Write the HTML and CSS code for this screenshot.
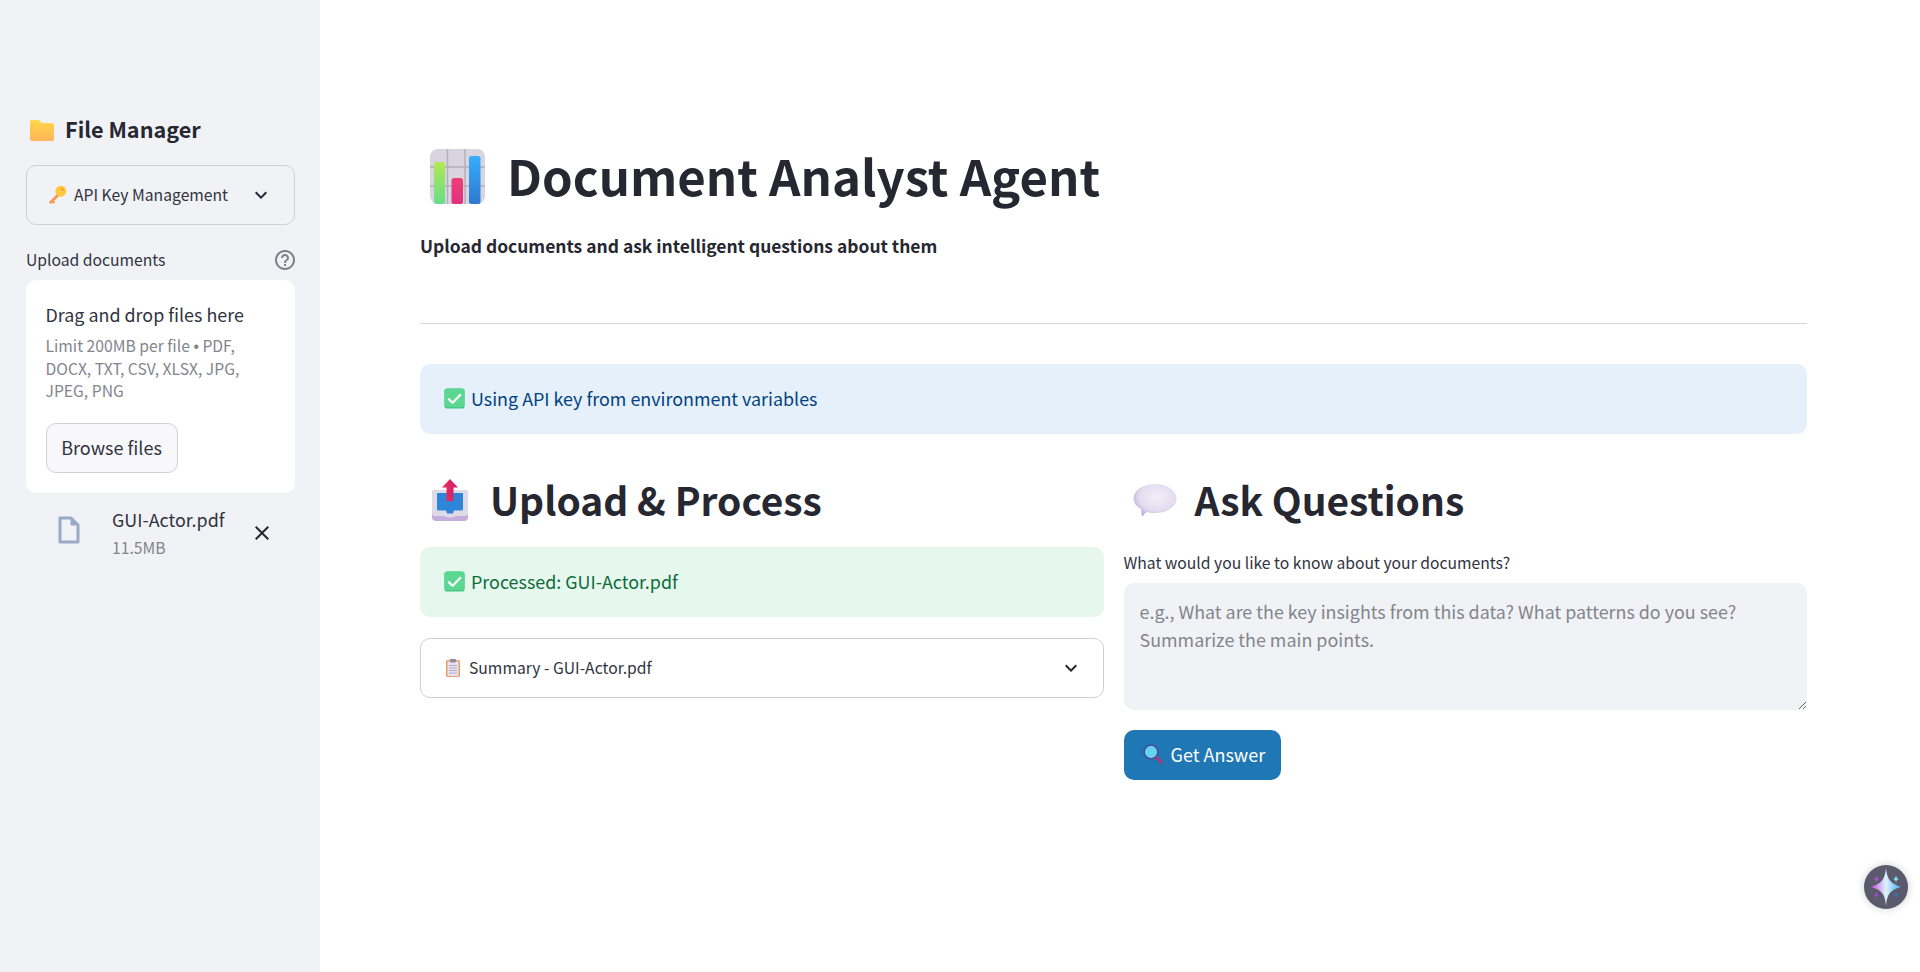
FILE: index.html

```html
<!DOCTYPE html>
<html>
<head>
<meta charset="utf-8">
<title>Document Analyst Agent</title>
<link rel="stylesheet" href="styles.css">
</head>
<body>
<svg class="defs" width="0" height="0">
  <defs>
    <linearGradient id="gGreen" x1="0" y1="0" x2="0" y2="1"><stop offset="0" stop-color="#b4e84e"/><stop offset="1" stop-color="#66dd8c"/></linearGradient>
    <linearGradient id="gPink" x1="0" y1="0" x2="0" y2="1"><stop offset="0" stop-color="#ef3f77"/><stop offset="1" stop-color="#e0307f"/></linearGradient>
    <linearGradient id="gBlue" x1="0" y1="0" x2="0" y2="1"><stop offset="0" stop-color="#36aefc"/><stop offset="1" stop-color="#2f78d0"/></linearGradient>
    <linearGradient id="gFolder" x1="0" y1="0" x2="0" y2="1"><stop offset="0" stop-color="#ffd84f"/><stop offset="1" stop-color="#ffb357"/></linearGradient>
    <linearGradient id="gArrow" x1="0" y1="0" x2="1" y2="0"><stop offset="0" stop-color="#f0304f"/><stop offset="1" stop-color="#c81e78"/></linearGradient>
    <radialGradient id="gBubble" cx="0.55" cy="0.4" r="0.65"><stop offset="0" stop-color="#f3eff8"/><stop offset="0.65" stop-color="#e4dcef"/><stop offset="1" stop-color="#b8a5d8"/></radialGradient>
    <linearGradient id="gStar" x1="0" y1="0" x2="1" y2="0"><stop offset="0" stop-color="#c04fd8"/><stop offset="0.5" stop-color="#dff2ff"/><stop offset="1" stop-color="#3fa8f0"/></linearGradient>
    <symbol id="check" viewBox="0 0 32 32">
      <rect x="2" y="2" width="28" height="28" rx="4" fill="#45c184"/>
      <rect x="2" y="2" width="28" height="26" rx="4" fill="#5ad892"/>
      <path d="M8 17l5.500 5L24 11" fill="none" stroke="#f6f4f8" stroke-width="3.200" stroke-linecap="round" stroke-linejoin="round"/>
    </symbol>
  </defs>
</svg>

<aside class="sidebar">
  <h2 class="side-title">
    <svg class="emoji-folder" viewBox="0 0 28 24"><path d="M2 4a2 2 0 0 1 2-2h7l3 3h10a2 2 0 0 1 2 2v14a2 2 0 0 1-2 2H4a2 2 0 0 1-2-2z" fill="url(#gFolder)"/><path d="M2 7h24v2H2z" fill="#ffc83d" opacity=".6"/></svg>
    <span>File Manager</span>
  </h2>

  <div class="expander side-expander">
    <span class="exp-label">
      <svg class="emoji-key" viewBox="0 0 20 20"><path d="M10 9 2.500 16.500l1.800 1.600 1.300-1.200 1.200 1 1.400-1.400-1-1.100L12 11z" fill="#f59a4a"/><circle cx="13.500" cy="6.500" r="5" fill="#ffc83d"/><circle cx="15" cy="5" r="1.300" fill="#f0a030"/></svg>
      <span>API Key Management</span>
    </span>
    <svg class="chevron" viewBox="0 0 24 24"><path d="M16.590 8.590 12 13.170 7.410 8.590 6 10l6 6 6-6z"/></svg>
  </div>

  <div class="upload-label">
    <span>Upload documents</span>
    <svg class="help" viewBox="0 0 24 24"><path d="M11 18h2v-2h-2v2zm1-16C6.480 2 2 6.480 2 12s4.480 10 10 10 10-4.480 10-10S17.520 2 12 2zm0 18c-4.410 0-8-3.590-8-8s3.590-8 8-8 8 3.590 8 8-3.590 8-8 8zm0-14c-2.210 0-4 1.790-4 4h2c0-1.100.9-2 2-2s2 .9 2 2c0 2-3 1.750-3 5h2c0-2.250 3-2.500 3-5 0-2.210-1.790-4-4-4z"/></svg>
  </div>
  <div class="dropzone">
    <div class="drop-title">Drag and drop files here</div>
    <div class="drop-hint">Limit 200MB per file <span class="dot">•</span> PDF,<br>DOCX, TXT, CSV, XLSX, JPG,<br>JPEG, PNG</div>
    <button class="browse">Browse files</button>
  </div>

  <div class="file-row">
    <svg class="file-icon" viewBox="0 0 24 30"><path d="M3 3h11l7 7v17H3z" fill="none" stroke="#9aa9c8" stroke-width="3" stroke-linejoin="round"/><path d="M14 3v7h7z" fill="#9aa9c8" stroke="#9aa9c8" stroke-width="1" stroke-linejoin="round"/></svg>
    <div class="file-info">
      <div class="file-name">GUI-Actor.pdf</div>
      <div class="file-size">11.5MB</div>
    </div>
    <svg class="file-close" viewBox="0 0 24 24"><path d="M19 6.410 17.590 5 12 10.590 6.410 5 5 6.410 10.590 12 5 17.590 6.410 19 12 13.410 17.590 19 19 17.590 13.410 12z"/></svg>
  </div>
</aside>

<main class="main">
  <h1 class="title">
    <svg class="emoji-chart" viewBox="0 0 55 55">
      <rect width="55" height="55" rx="8" fill="#d8d4e0"/>
      <path d="M17.500 0v55M35 0v55M0 18h55M0 37h55" stroke="#b3afbc" stroke-width="1.500"/>
      <rect x="4" y="13" width="11" height="42" rx="2.500" fill="url(#gGreen)"/>
      <rect x="21.500" y="29" width="11.500" height="26" rx="2.500" fill="url(#gPink)"/>
      <rect x="39" y="7" width="11.500" height="48" rx="2.500" fill="url(#gBlue)"/>
    </svg>
    <span>Document Analyst Agent</span>
  </h1>
  <p class="subtitle">Upload documents and ask intelligent questions about them</p>
  <hr class="rule">
  <div class="alert alert-info">
    <svg class="emoji-check"><use href="#check"/></svg>
    Using API key from environment variables
  </div>

  <div class="columns">
    <section class="col">
      <h2 class="section-title">
        <svg class="emoji-upload" viewBox="0 0 38 44">
          <path d="M1 39V15a3 3 0 0 1 3-3h30a3 3 0 0 1 3 3v24a4 4 0 0 1-4 4H5a4 4 0 0 1-4-4z" fill="#c3aedc"/>
          <path d="M1 35V15a3 3 0 0 1 3-3h30a3 3 0 0 1 3 3v20a3 3 0 0 1-3 3h-9q-6 3-12 0H4a3 3 0 0 1-3-3z" fill="#dfdbe6"/>
          <path d="M6 15h26v16a1.500 1.500 0 0 1-1.500 1.500H23l-1 3h-6l-1-3H7.500A1.500 1.500 0 0 1 6 31z" fill="#2f86d8"/>
          <path d="M19 1 27 9.500H22.500V23h-7V9.500H11z" fill="url(#gArrow)"/>
        </svg>
        <span>Upload &amp; Process</span>
      </h2>
      <div class="alert alert-success">
        <svg class="emoji-check"><use href="#check"/></svg>
        Processed: GUI-Actor.pdf
      </div>
      <div class="expander main-expander">
        <span class="exp-label">
          <svg class="emoji-clip" viewBox="0 0 14 18"><rect x="0" y="1" width="14" height="17" rx="1.500" fill="#e8a068"/><rect x="1.500" y="2.500" width="11" height="14.500" fill="#e8e2f0"/><rect x="4" y="0" width="6" height="3.500" rx="1" fill="#8f8a9c"/><path d="M3 6.500h8M3 9h8M3 11.500h8M3 14h8" stroke="#b0a8c4" stroke-width=".9"/></svg>
          <span>Summary - GUI-Actor.pdf</span>
        </span>
        <svg class="chevron" viewBox="0 0 24 24"><path d="M16.590 8.590 12 13.170 7.410 8.590 6 10l6 6 6-6z"/></svg>
      </div>
    </section>

    <section class="col">
      <h2 class="section-title ask">
        <svg class="emoji-bubble" viewBox="0 0 44 34"><path d="M22 1c12 0 21.500 6.500 21.500 14.500S34 30 22 30c-3 0-6-.4-8.500-1.100L9 33.500l-1-7.500C3.500 23.500.5 19.800.5 15.500.5 7.500 10 1 22 1z" fill="url(#gBubble)"/></svg>
        <span>Ask Questions</span>
      </h2>
      <label class="field-label" for="question">What would you like to know about your documents?</label>
      <textarea id="question" class="question" placeholder="e.g., What are the key insights from this data? What patterns do you see? Summarize the main points."></textarea>
      <button class="answer">
        <svg class="emoji-glass" viewBox="0 0 20 20"><path d="m12.500 12.500 6 6" stroke="#a8377f" stroke-width="3" stroke-linecap="round"/><circle cx="8" cy="8" r="6.800" fill="#62d4f0" stroke="#5a3c92" stroke-width="1.300"/></svg>
        Get Answer
      </button>
    </section>
  </div>
</main>

<div class="fab">
  <svg viewBox="0 0 44 44">
    <path d="M22 3c1 11 4 15 15 19-11 3-14 7-15 19-1-12-4-16-15-19 11-4 14-8 15-19z" fill="url(#gStar)"/>
    <path d="M12.500 10c.3 2.500 1 3.300 3 4-2 .7-2.700 1.500-3 4-.3-2.500-1-3.300-3-4 2-.7 2.700-1.500 3-4z" fill="#b04fd0"/>
    <path d="M32 10c.3 2.500 1 3.300 3 4-2 .7-2.700 1.500-3 4-.3-2.500-1-3.300-3-4 2-.7 2.700-1.500 3-4z" fill="#7fe0f0"/>
    <path d="M12.500 26c.3 2.500 1 3.300 3 4-2 .7-2.700 1.500-3 4-.3-2.500-1-3.300-3-4 2-.7 2.700-1.500 3-4z" fill="#a04cc8"/>
    <path d="M32 26c.3 2.500 1 3.300 3 4-2 .7-2.700 1.500-3 4-.3-2.500-1-3.300-3-4 2-.7 2.700-1.500 3-4z" fill="#3f6cb0"/>
  </svg>
</div>
</body>
</html>
```

FILE: styles.css

```css
* {
  box-sizing: border-box;
}
html, body {
  height: 100%;
}
body {
  margin: 0;
  display: flex;
  overflow: hidden;
  font-family: "Noto Sans CJK SC", "Noto Sans", sans-serif;
  color: #31333f;
  background: #fff;
}
.defs {
  position: absolute;
}
svg {
  flex: none;
}

/* sidebar */
.sidebar {
  flex: none;
  width: 320px;
  height: 100%;
  padding: 112px 25px 0 26px;
  background: #f0f2f6;
}
.side-title {
  display: flex;
  align-items: center;
  gap: 9px;
  height: 36px;
  margin: 0 0 17px;
  padding-left: 2px;
  font-size: 21.6px;
  font-weight: 600;
  color: #262730;
}
.side-title span {
  margin-bottom: 4px;
}
.emoji-folder {
  width: 28px;
  height: 24px;
}
.expander {
  display: flex;
  align-items: center;
  justify-content: space-between;
  border: 1px solid #d0d1d6;
  border-radius: 10px;
}
.side-expander {
  height: 60px;
  padding: 0 21px 0 19px;
}
.exp-label {
  display: flex;
  align-items: center;
  gap: 6px;
  font-size: 15.7px;
}
.exp-label span {
  margin-bottom: 2px;
}
.emoji-key {
  width: 22px;
  height: 22px;
}
.chevron {
  width: 24px;
  height: 24px;
  fill: #262730;
}
.upload-label {
  display: flex;
  align-items: center;
  justify-content: space-between;
  height: 24px;
  margin: 23px -2px 8px 0;
  font-size: 15.7px;
}
.upload-label span {
  margin-bottom: 2px;
}
.help {
  width: 24px;
  height: 24px;
  fill: #7d7e88;
}
.dropzone {
  height: 213px;
  padding: 21px 20px 0 19.500px;
  background: #fff;
  border-radius: 10px;
}
.drop-title {
  font-size: 17.9px;
  line-height: 26px;
}
.drop-hint {
  margin-top: 8px;
  font-size: 15.7px;
  line-height: 22px;
  color: #83858c;
}
.dot {
  font-family: "Liberation Sans", sans-serif;
}
.browse {
  display: block;
  width: 132px;
  height: 50px;
  margin-top: 21px;
  padding: 0 0 2px;
  background: #f8f8fb;
  border: 1px solid #d0d1d6;
  border-radius: 10px;
  font-family: inherit;
  font-size: 18px;
  color: #31333f;
}
.file-row {
  display: flex;
  align-items: center;
  height: 80px;
  padding: 0 0 0 31px;
}
.file-icon {
  width: 24px;
  height: 30px;
  margin-top: -6px;
}
.file-info {
  margin-left: 31px;
  width: 138px;
}
.file-name {
  font-size: 17.9px;
  line-height: 28px;
}
.file-size {
  margin-top: 2px;
  font-size: 15.7px;
  line-height: 26px;
  color: #83858c;
}
.file-close {
  width: 24px;
  height: 24px;
  fill: #262730;
}

/* main column */
.main {
  flex: 1;
  padding: 143px 113px 0 100px;
}
.title {
  display: flex;
  align-items: center;
  gap: 22px;
  height: 66px;
  margin: 0 0 0 10px;
  font-size: 49.1px;
  font-weight: 700;
  color: #262730;
}
.title span {
  margin-bottom: 3px;
}
.emoji-chart {
  width: 55px;
  height: 55px;
}
.subtitle {
  margin: 22px 0 0;
  font-size: 17.45px;
  line-height: 30px;
  font-weight: 600;
  color: #262730;
}
.rule {
  height: 1px;
  margin: 62px 0 40px;
  border: 0;
  background: #d5d6d9;
}
.alert {
  display: flex;
  align-items: center;
  gap: 5px;
  height: 70px;
  padding: 0 0 2px 23px;
  border-radius: 10px;
  font-size: 17.9px;
}
.alert-info {
  background: #e6f0fb;
  color: #004280;
}
.alert-success {
  background: #e6f8ee;
  color: #0e6b3a;
  margin-top: 17px;
}
.emoji-check {
  width: 23px;
  height: 23px;
}
.columns {
  display: flex;
  gap: 20px;
  margin-top: 36px;
}
.col {
  flex: 1;
  min-width: 0;
}
.section-title {
  display: flex;
  align-items: center;
  height: 60px;
  margin: 0;
  padding-left: 11px;
  gap: 21px;
  font-size: 38.9px;
  font-weight: 600;
  color: #262730;
}
.section-title span {
  margin-bottom: 2px;
}
.section-title.ask {
  padding-left: 9px;
  gap: 18px;
}
.emoji-upload {
  width: 38px;
  height: 44px;
}
.emoji-bubble {
  width: 44px;
  height: 34px;
}
.main-expander {
  height: 60px;
  margin-top: 21px;
  padding: 0 20px 0 25px;
  background: #fff;
}
.main-expander .exp-label {
  gap: 9px;
}
.emoji-clip {
  width: 14px;
  height: 18px;
}
.field-label {
  display: block;
  margin-top: 22px;
  font-size: 15.7px;
  line-height: 22px;
}
.question {
  display: block;
  width: 100%;
  height: 127px;
  margin-top: 9px;
  padding: 14px 16px;
  background: #f0f2f6;
  border: 0;
  border-radius: 10px;
  outline: 0;
  font-family: inherit;
  font-size: 17.9px;
  line-height: 28px;
  color: #31333f;
}
.question::placeholder {
  color: #83858c;
  opacity: 1;
}
.answer {
  display: flex;
  align-items: center;
  gap: 8px;
  width: 157px;
  height: 50px;
  margin-top: 20px;
  padding: 0 0 2px 19px;
  background: #1f77b4;
  border: 0;
  border-radius: 10px;
  font-family: inherit;
  font-size: 18px;
  color: #fff;
}
.emoji-glass {
  width: 20px;
  height: 20px;
}

/* floating button */
.fab {
  position: fixed;
  left: 1864px;
  top: 865px;
  width: 44px;
  height: 44px;
  border-radius: 50%;
  background: #5a5a6c;
  box-shadow: 0 0 8px rgba(0, 0, 0, .2);
}
.fab svg {
  display: block;
  width: 44px;
  height: 44px;
}
```
